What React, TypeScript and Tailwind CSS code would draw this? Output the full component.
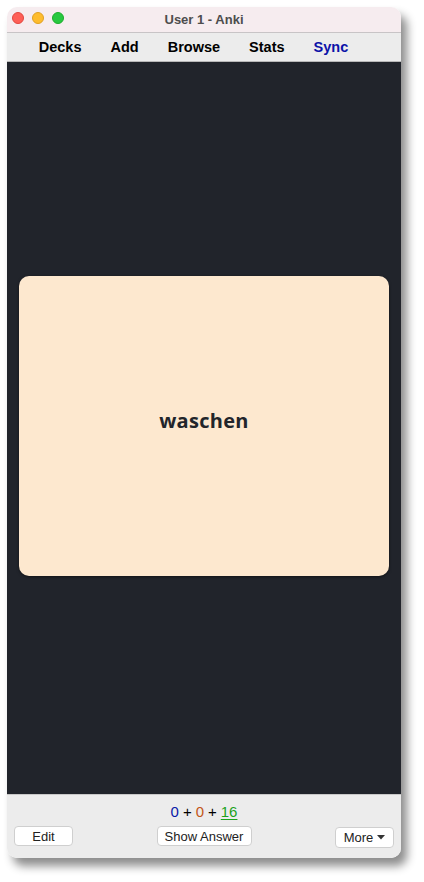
import React from "react";

const navItems = [
  { label: "Decks", color: "text-black" },
  { label: "Add", color: "text-black" },
  { label: "Browse", color: "text-black" },
  { label: "Stats", color: "text-black" },
  { label: "Sync", color: "text-[#0b12a8]" },
];

const App = () => {
  return (
    <div className="w-[424px] h-[882px] bg-white pt-[7px] pl-[7px] font-['Liberation_Sans',Arial,sans-serif]">
      <div className="w-[394px] h-[851px] flex flex-col rounded-[10px] overflow-hidden shadow-[6px_8px_10px_rgba(0,0,0,0.45)]">
        {/* Title bar */}
        <div className="h-[26px] shrink-0 bg-[#f6ecef] border-b border-[#c8c4c6] relative flex items-center justify-center">
          <div className="absolute left-[5px] top-[5px] flex gap-[8px]">
            <span className="w-[12px] h-[12px] rounded-full bg-[#fe5f57] border border-[#e1473f]" />
            <span className="w-[12px] h-[12px] rounded-full bg-[#febc2e] border border-[#dfa023]" />
            <span className="w-[12px] h-[12px] rounded-full bg-[#28c840] border border-[#1dad2b]" />
          </div>
          <span className="text-[13px] font-bold text-[#4d4d4d] leading-none">User 1 - Anki</span>
        </div>

        {/* Toolbar */}
        <div className="h-[29px] shrink-0 bg-[#ececec] border-b border-[#b8b8b8] flex items-center justify-center gap-[29px] pr-[21px]">
          {navItems.map((item) => (
            <span key={item.label} className={`text-[14.5px] font-bold leading-none ${item.color}`}>
              {item.label}
            </span>
          ))}
        </div>

        {/* Reviewer area */}
        <div className="flex-1 bg-[#21242b] flex items-center px-[12px] pb-[5px]">
          <div className="w-full h-[300px] rounded-[10px] bg-[#fde8cf] shadow-[0_1px_3px_rgba(0,0,0,0.5)] flex items-center justify-center pb-[10px]">
            <span className="text-[20px] font-bold text-[#22252b] font-['Open_Sans',sans-serif] tracking-[0.3px]">waschen</span>
          </div>
        </div>

        {/* Bottom bar */}
        <div className="h-[64px] shrink-0 bg-[#ececec] border-t border-[#c8c8c8] flex flex-col px-[7px] pt-[9px]">
          <div className="flex justify-center text-[15px] leading-none gap-[4px]">
            <span className="text-[#0a1aa8]">0</span>
            <span className="text-black">+</span>
            <span className="text-[#c35617]">0</span>
            <span className="text-black">+</span>
            <span className="text-[#1ca21c] underline underline-offset-2">16</span>
          </div>
          <div className="flex items-start justify-between mt-[7px]">
            <button className="w-[59px] h-[20px] bg-white border border-[#cfcfcf] rounded-[4px] text-[13px] text-[#222] leading-none">
              Edit
            </button>
            <button className="w-[95px] h-[20px] bg-white border border-[#cfcfcf] rounded-[4px] text-[13px] text-[#222] leading-none">
              Show Answer
            </button>
            <button className="w-[59px] h-[21px] mt-[1px] bg-white border border-[#cfcfcf] rounded-[4px] text-[13px] text-[#222] leading-none flex items-center justify-center gap-[4px]">
              More
              <svg width="8" height="5" viewBox="0 0 8 5">
                <path d="M0 0 L8 0 L4 4.5 Z" fill="#333" />
              </svg>
            </button>
          </div>
        </div>
      </div>
    </div>
  );
};

export default App;
